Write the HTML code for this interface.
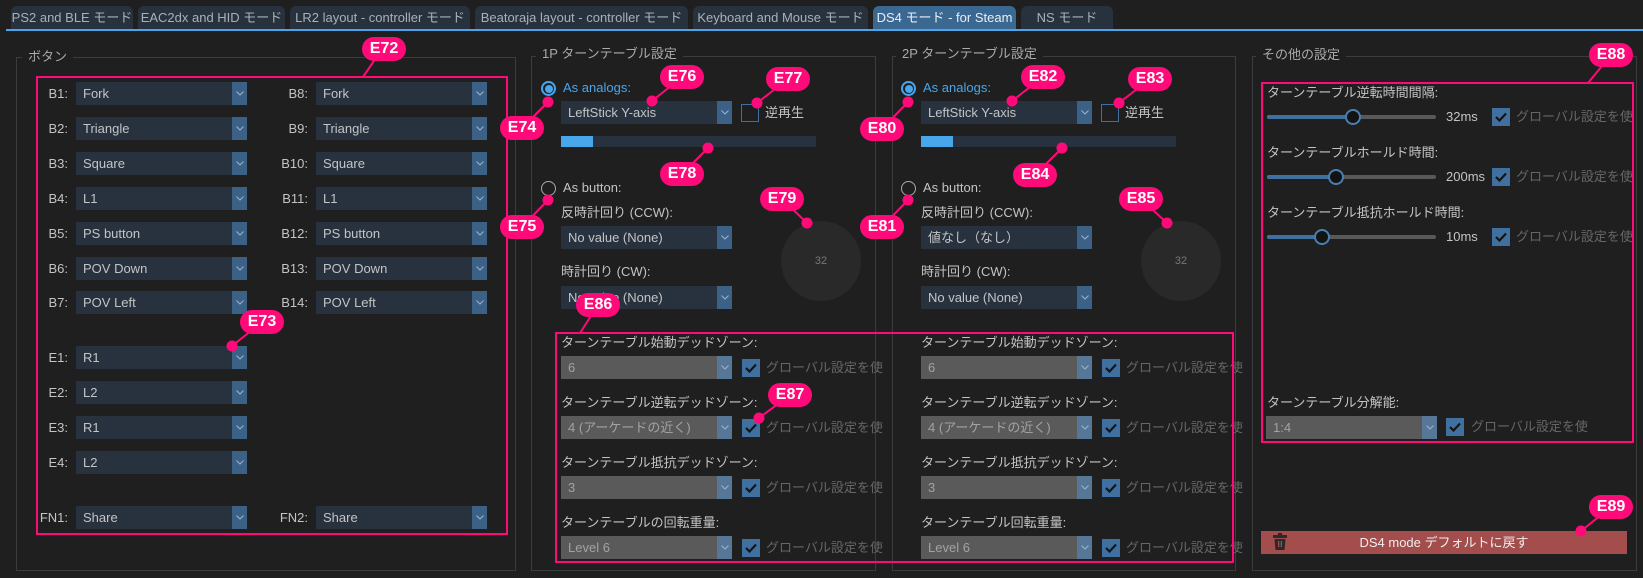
<!DOCTYPE html>
<html><head><meta charset="utf-8"><style>
*{box-sizing:border-box;margin:0;padding:0}
body{width:1643px;height:578px;background:#1f1f1f;position:relative;overflow:hidden;font-family:"Liberation Sans","Noto Sans CJK JP",sans-serif;font-size:13px;color:#c4c4c4}
.a{position:absolute}
.tab{position:absolute;top:6px;height:23px;background:#28323e;border-radius:6px 6px 0 0;color:#a9b0b8;font-size:13px;line-height:23px;text-align:center;white-space:nowrap}
.grp{position:absolute;border:1px solid #3c3c3c}
.gt{position:absolute;background:#1f1f1f;padding:0 6px;color:#aaa;font-size:13px;line-height:16px;white-space:nowrap}
.cb{position:absolute;height:23px;background:#28323f;color:#c4c4c4;line-height:23px;padding-left:7px;white-space:nowrap;overflow:hidden}
.cb .ar{position:absolute;right:0;top:0;width:15px;height:23px;background:#3c6186}
.cb.d{background:#5a5a5a;color:#a2a2a2}
.cb.d .ar{background:#567797}
.ar svg{position:absolute;left:4px;top:9px}
.lb{position:absolute;line-height:16px;white-space:nowrap}
.rl{position:absolute;width:50px;text-align:right;line-height:23px}
.ck{position:absolute;width:18px;height:18px;background:#3f70a0}
.ck svg{position:absolute;left:3px;top:4px}
.gl{position:absolute;color:#666;line-height:18px;white-space:nowrap}
.mb{position:absolute;border:2px solid #ff0a78}
.pill{position:absolute;width:44px;height:24px;margin:-12px 0 0 -22px;background:#ff0a78;color:#fff;font-weight:bold;font-size:16px;line-height:24px;text-align:center;border-radius:12px;font-family:"Liberation Sans",sans-serif}
.radio{position:absolute;width:15px;height:15px;border-radius:50%;margin:-7px 0 0 -7px}
</style></head><body>
<!-- tabs -->
<div class="tab" style="left:11px;width:122px">PS2 and BLE モード</div>
<div class="tab" style="left:138px;width:147px">EAC2dx and HID モード</div>
<div class="tab" style="left:290px;width:180px">LR2 layout - controller モード</div>
<div class="tab" style="left:475px;width:213px">Beatoraja layout - controller モード</div>
<div class="tab" style="left:693px;width:175px">Keyboard and Mouse モード</div>
<div class="tab" style="left:873px;width:143px;background:#3b6891;color:#e6eef6">DS4 モード - for Steam</div>
<div class="tab" style="left:1021px;width:92px">NS モード</div>
<div class="a" style="left:6px;top:29px;width:1637px;height:2px;background:#4aa6ea"></div>

<!-- groups -->
<div class="grp" style="left:16px;top:57px;width:500px;height:514px"></div>
<div class="gt" style="left:22px;top:49px">ボタン</div>
<div class="grp" style="left:531px;top:56px;width:345px;height:515px"></div>
<div class="gt" style="left:536px;top:46px">1P ターンテーブル設定</div>
<div class="grp" style="left:892px;top:56px;width:344px;height:515px"></div>
<div class="gt" style="left:896px;top:46px">2P ターンテーブル設定</div>
<div class="grp" style="left:1252px;top:56px;width:385px;height:515px"></div>
<div class="gt" style="left:1256px;top:47px">その他の設定</div>

<!-- buttons panel -->
<div id="btns"></div>
<script>
var ch='<div class="ar"><svg width="8" height="5"><polyline points="0.5,0.5 4,4 7.5,0.5" fill="none" stroke="#9fb4c8" stroke-width="1"/></svg></div>';
var chk='<svg width="12" height="10"><polyline points="1,5 4.5,8.5 11,1.5" fill="none" stroke="#151515" stroke-width="2.2"/></svg>';
var h='';
var L=[["B1:","Fork",82],["B2:","Triangle",117],["B3:","Square",152],["B4:","L1",187],["B5:","PS button",222],["B6:","POV Down",257],["B7:","POV Left",291],["E1:","R1",346],["E2:","L2",381],["E3:","R1",416],["E4:","L2",451],["FN1:","Share",506]];
var R=[["B8:","Fork",82],["B9:","Triangle",117],["B10:","Square",152],["B11:","L1",187],["B12:","PS button",222],["B13:","POV Down",257],["B14:","POV Left",291],["FN2:","Share",506]];
L.forEach(function(r){h+='<div class="rl" style="left:18px;top:'+r[2]+'px">'+r[0]+'</div><div class="cb" style="left:76px;top:'+r[2]+'px;width:171px">'+r[1]+ch+'</div>';});
R.forEach(function(r){h+='<div class="rl" style="left:258px;top:'+r[2]+'px">'+r[0]+'</div><div class="cb" style="left:316px;top:'+r[2]+'px;width:171px">'+r[1]+ch+'</div>';});
// turntable panels
[[0,"No value (None)"],[360,"値なし（なし）"]].forEach(function(p){
var o=p[0];
h+='<div class="radio" style="left:'+(548+o)+'px;top:88px;border:2px solid #4aa6ea;background:#1f1f1f"><div style="position:absolute;left:1.5px;top:1.5px;width:8px;height:8px;border-radius:50%;background:#4aa6ea"></div></div>';
h+='<div class="lb" style="left:'+(563+o)+'px;top:80px;color:#4aa6ea">As analogs:</div>';
h+='<div class="cb" style="left:'+(561+o)+'px;top:101px;width:171px">LeftStick Y-axis'+ch+'</div>';
h+='<div class="a" style="left:'+(741+o)+'px;top:104px;width:18px;height:18px;border:1px solid #3f70a0"></div>';
h+='<div class="lb" style="left:'+(765+o)+'px;top:105px">逆再生</div>';
h+='<div class="a" style="left:'+(561+o)+'px;top:136px;width:255px;height:11px;background:#28323f"><div style="width:32px;height:11px;background:#4aa6ea"></div></div>';
h+='<div class="radio" style="left:'+(548+o)+'px;top:188px;border:1px solid #aaa"></div>';
h+='<div class="lb" style="left:'+(563+o)+'px;top:180px">As button:</div>';
h+='<div class="lb" style="left:'+(561+o)+'px;top:205px">反時計回り (CCW):</div>';
h+='<div class="cb" style="left:'+(561+o)+'px;top:226px;width:171px">'+p[1]+ch+'</div>';
h+='<div class="lb" style="left:'+(561+o)+'px;top:264px">時計回り (CW):</div>';
h+='<div class="cb" style="left:'+(561+o)+'px;top:286px;width:171px">No value (None)'+ch+'</div>';
h+='<div class="a" style="left:'+(781+o)+'px;top:221px;width:80px;height:80px;border-radius:50%;background:#292929;color:#777;font-size:11px;line-height:80px;text-align:center">32</div>';
var D=[["ターンテーブル始動デッドゾーン:","6",335],["ターンテーブル逆転デッドゾーン:","4 (アーケードの近く)",395],["ターンテーブル抵抗デッドゾーン:","3",455],[o?"ターンテーブル回転重量:":"ターンテーブルの回転重量:","Level 6",515]];
D.forEach(function(d){
h+='<div class="lb" style="left:'+(561+o)+'px;top:'+d[2]+'px">'+d[0]+'</div>';
h+='<div class="cb d" style="left:'+(561+o)+'px;top:'+(d[2]+21)+'px;width:171px">'+d[1]+ch+'</div>';
h+='<div class="ck" style="left:'+(742+o)+'px;top:'+(d[2]+24)+'px">'+chk+'</div>';
h+='<div class="gl" style="left:'+(766+o)+'px;top:'+(d[2]+24)+'px">グローバル設定を使</div>';
});
});
// other settings
[["ターンテーブル逆転時間間隔:","32ms",85,1353],["ターンテーブルホールド時間:","200ms",145,1336],["ターンテーブル抵抗ホールド時間:","10ms",205,1322]].forEach(function(s){
var t=s[2];
h+='<div class="lb" style="left:1267px;top:'+t+'px">'+s[0]+'</div>';
h+='<div class="a" style="left:1267px;top:'+(t+30)+'px;width:169px;height:4px;border-radius:2px;background:#595959"></div>';
h+='<div class="a" style="left:1267px;top:'+(t+30)+'px;width:'+(s[3]-1267)+'px;height:4px;border-radius:2px;background:#3f70a0"></div>';
h+='<div class="a" style="left:'+(s[3]-8)+'px;top:'+(t+24)+'px;width:16px;height:16px;border-radius:50%;background:#131313;border:2px solid #4a7fb3"></div>';
h+='<div class="lb" style="left:1446px;top:'+(t+24)+'px">'+s[1]+'</div>';
h+='<div class="ck" style="left:1492px;top:'+(t+23)+'px">'+chk+'</div>';
h+='<div class="gl" style="left:1516px;top:'+(t+23)+'px">グローバル設定を使</div>';
});
h+='<div class="lb" style="left:1267px;top:395px">ターンテーブル分解能:</div>';
h+='<div class="cb d" style="left:1266px;top:416px;width:171px">1:4'+ch+'</div>';
h+='<div class="ck" style="left:1446px;top:418px">'+chk+'</div>';
h+='<div class="gl" style="left:1471px;top:418px">グローバル設定を使</div>';
document.getElementById('btns').innerHTML=h;
</script>
<div class="a" style="left:1261px;top:531px;width:366px;height:23px;background:#a34d4d;color:#eee;text-align:center;line-height:23px">DS4 mode デフォルトに戻す</div>
<svg class="a" style="left:1273px;top:533px" width="14" height="18"><rect x="0" y="2" width="14" height="3" fill="#2a2a2a"/><rect x="5" y="0" width="4" height="3" fill="#2a2a2a"/><path d="M1.5 6 H12.5 L11.5 17 H2.5 Z" fill="#2a2a2a"/><rect x="5" y="8" width="1.3" height="6" fill="#a34d4d"/><rect x="7.7" y="8" width="1.3" height="6" fill="#a34d4d"/></svg>

<!-- magenta annotation boxes -->
<div class="mb" style="left:36px;top:76px;width:472px;height:459px"></div>
<div class="mb" style="left:555px;top:332px;width:679px;height:231px"></div>
<div class="mb" style="left:1261px;top:82px;width:373px;height:361px"></div>

<svg class="a" style="left:0;top:0" width="1643" height="578">
<g stroke="#ff0a78" stroke-width="2" fill="#ff0a78">
<line x1="378" y1="55" x2="363" y2="77"/>
<line x1="262" y1="322" x2="232" y2="346"/><circle cx="232" cy="346" r="4.5"/>
<line x1="522" y1="128" x2="548" y2="102"/><circle cx="548" cy="102" r="4.5"/>
<line x1="522" y1="227" x2="548" y2="200"/><circle cx="548" cy="200" r="4.5"/>
<line x1="682" y1="77" x2="652" y2="101"/><circle cx="652" cy="101" r="4.5"/>
<line x1="788" y1="79" x2="757" y2="103"/><circle cx="757" cy="103" r="4.5"/>
<line x1="682" y1="174" x2="708" y2="148"/><circle cx="708" cy="148" r="4.5"/>
<line x1="782" y1="199" x2="807" y2="223"/><circle cx="807" cy="223" r="4.5"/>
<line x1="882" y1="129" x2="908" y2="102"/><circle cx="908" cy="102" r="4.5"/>
<line x1="882" y1="227" x2="908" y2="200"/><circle cx="908" cy="200" r="4.5"/>
<line x1="1043" y1="77" x2="1012" y2="101"/><circle cx="1012" cy="101" r="4.5"/>
<line x1="1150" y1="79" x2="1119" y2="103"/><circle cx="1119" cy="103" r="4.5"/>
<line x1="1035" y1="175" x2="1062" y2="148"/><circle cx="1062" cy="148" r="4.5"/>
<line x1="1141" y1="199" x2="1167" y2="223"/><circle cx="1167" cy="223" r="4.5"/>
<line x1="598" y1="305" x2="580" y2="333"/>
<line x1="790" y1="395" x2="759" y2="418"/><circle cx="759" cy="418" r="4.5"/>
<line x1="1611" y1="55" x2="1588" y2="83"/>
<line x1="1611" y1="507" x2="1581" y2="531"/><circle cx="1581" cy="531" r="4.5"/>
</g></svg>
<div class="pill" style="left:384px;top:49px">E72</div>
<div class="pill" style="left:262px;top:322px">E73</div>
<div class="pill" style="left:522px;top:128px">E74</div>
<div class="pill" style="left:522px;top:227px">E75</div>
<div class="pill" style="left:682px;top:77px">E76</div>
<div class="pill" style="left:788px;top:79px">E77</div>
<div class="pill" style="left:682px;top:174px">E78</div>
<div class="pill" style="left:782px;top:199px">E79</div>
<div class="pill" style="left:882px;top:129px">E80</div>
<div class="pill" style="left:882px;top:227px">E81</div>
<div class="pill" style="left:1043px;top:77px">E82</div>
<div class="pill" style="left:1150px;top:79px">E83</div>
<div class="pill" style="left:1035px;top:175px">E84</div>
<div class="pill" style="left:1141px;top:199px">E85</div>
<div class="pill" style="left:598px;top:305px">E86</div>
<div class="pill" style="left:790px;top:395px">E87</div>
<div class="pill" style="left:1611px;top:55px">E88</div>
<div class="pill" style="left:1611px;top:507px">E89</div>
</body></html>
